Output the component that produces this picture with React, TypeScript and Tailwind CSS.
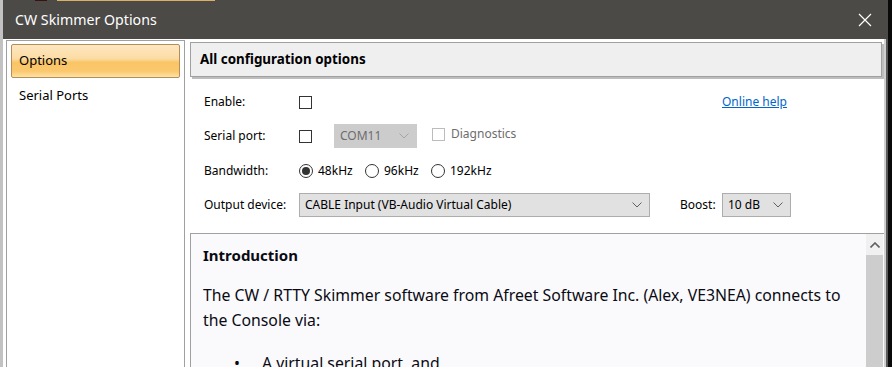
import React from 'react'

const font = { fontFamily: '"Noto Sans", "Open Sans", Arial, sans-serif' }

function Checkbox({ disabled = false }: { disabled?: boolean }) {
  return (
    <div
      className={
        'w-[13px] h-[13px] border bg-white shrink-0 ' +
        (disabled ? 'border-[#bcbcbc]' : 'border-[#333333]')
      }
    />
  )
}

function Radio({ checked = false }: { checked?: boolean }) {
  return (
    <div className="w-[14px] h-[14px] rounded-full border border-[#333333] bg-white flex items-center justify-center shrink-0">
      {checked && <div className="w-[8px] h-[8px] rounded-full bg-[#333333]" />}
    </div>
  )
}

function Chevron({ color = '#606060' }: { color?: string }) {
  return (
    <svg width="10" height="6" viewBox="0 0 10 6" className="shrink-0">
      <path d="M0.5 0.5 L5 5 L9.5 0.5" fill="none" stroke={color} strokeWidth="1" />
    </svg>
  )
}

function Select({ value, width, disabled = false }: { value: string; width: string; disabled?: boolean }) {
  return (
    <div
      className={
        'h-[24px] flex items-center justify-between pl-[5px] pr-[7px] border ' +
        width +
        (disabled
          ? ' bg-[#cccccc] border-[#cccccc] text-[#6d6d6d]'
          : ' bg-[#e1e1e1] border-[#adadad] text-black')
      }
    >
      <span>{value}</span>
      <Chevron color={disabled ? '#a4a4a4' : '#606060'} />
    </div>
  )
}

export default function App() {
  return (
    <div className="w-[892px] h-[367px] overflow-hidden flex bg-[#0a0a0a]" style={font}>
      <div className="w-[3px] bg-[#c2c2c2] shrink-0" />
      <div className="w-[885px] flex flex-col shrink-0 overflow-hidden">
        {/* desktop strip behind the window */}
        <div className="h-px flex bg-[#4b4a47] shrink-0">
          <div className="w-[32px]" />
          <div className="w-[12px] bg-[#3a1010]" />
          <div className="w-[10px]" />
          <div className="w-[158px] bg-[#d9b064]" />
        </div>

        {/* title bar */}
        <div className="h-[38px] shrink-0 bg-[#4b4a47] flex items-center justify-between pl-[12px] pr-[16px] text-white">
          <span className="text-[14.2px]">CW Skimmer Options</span>
          <svg width="14" height="14" viewBox="0 0 14 14">
            <path d="M1 1 L13 13 M13 1 L1 13" stroke="#ffffff" strokeWidth="1.2" />
          </svg>
        </div>

        {/* body */}
        <div className="flex-1 min-h-0 flex bg-white text-[12px] text-black">
          {/* navigation */}
          <div className="ml-[3px] mt-[1px] w-[179px] border border-[#a0a0a0] border-b-0 shrink-0 pt-[3px] px-[4px]">
            <div className="h-[34px] rounded-[2px] border border-[#b58d57] flex items-center pl-[7px] text-[13px] bg-[linear-gradient(to_bottom,#fde7c0_0%,#fcdca4_42%,#f9c565_55%,#fbc86f_82%,#fde2a8_100%)]">
              Options
            </div>
            <div className="h-[36px] flex items-center pl-[8px] text-[13px]">Serial Ports</div>
          </div>

          {/* right side */}
          <div className="w-[694px] ml-[5px] flex flex-col shrink-0">
            <div className="mt-[3px] shrink-0 w-[692px] h-[35px] bg-[#efefef] border border-[#a0a0a0] shadow-[2px_2px_0_#bdbdbd] flex items-center pl-[9px] font-bold text-[13.4px]">
              All configuration options
            </div>

            <div className="pt-[8px] pl-[14px] shrink-0">
              <div className="h-[34px] flex items-center">
                <div className="w-[95px]">Enable:</div>
                <div className="w-[423px]">
                  <Checkbox />
                </div>
                <span className="text-[#0066cc] underline">Online help</span>
              </div>

              <div className="h-[34px] flex items-center">
                <div className="w-[95px]">Serial port:</div>
                <Checkbox />
                <div className="ml-[22px]">
                  <Select value="COM11" width="w-[83px]" disabled />
                </div>
                <div className="ml-[15px] flex items-center gap-[6px] text-[#6d6d6d] -mt-[4px]">
                  <Checkbox disabled />
                  <span>Diagnostics</span>
                </div>
              </div>

              <div className="h-[35px] flex items-center">
                <div className="w-[95px]">Bandwidth:</div>
                <div className="w-[66px] flex items-center gap-[5px]">
                  <Radio checked />
                  <span>48kHz</span>
                </div>
                <div className="w-[66px] flex items-center gap-[5px]">
                  <Radio />
                  <span>96kHz</span>
                </div>
                <div className="flex items-center gap-[5px]">
                  <Radio />
                  <span>192kHz</span>
                </div>
              </div>

              <div className="h-[34px] flex items-center">
                <div className="w-[95px]">Output device:</div>
                <Select value="CABLE Input (VB-Audio Virtual Cable)" width="w-[351px]" />
                <div className="w-[42px] ml-[30px]">Boost:</div>
                <Select value="10 dB" width="w-[69px]" />
              </div>
            </div>

            {/* help content */}
            <div className="mt-[11px] w-[694px] flex-1 min-h-0 border border-[#a0a0a0] border-b-0 border-r-0 bg-[#fafafc] flex overflow-hidden">
              <div className="flex-1 pl-[12px] pt-[10px] text-[#0a0a14]">
                <div className="font-bold text-[15px] leading-[22px]">Introduction</div>
                <div className="mt-[17px] text-[15.8px] leading-[25px]">
                  The CW / RTTY Skimmer software from Afreet Software Inc. (Alex, VE3NEA) connects to the Console
                  via:
                </div>
                <ul className="mt-[18px] pl-[31px] text-[15.8px] leading-[25px]">
                  <li className="flex items-center">
                    <span className="w-[28px]">•</span>
                    <span>A virtual serial port, and</span>
                  </li>
                </ul>
              </div>
              <div className="w-[17px] mr-[1px] flex flex-col shrink-0">
                <div className="h-[21px] bg-[#f0f0f0] flex items-center justify-center">
                  <svg width="10" height="6" viewBox="0 0 10 6">
                    <path d="M0.5 5.5 L5 1 L9.5 5.5" fill="none" stroke="#606060" strokeWidth="1.6" />
                  </svg>
                </div>
                <div className="flex-1 bg-[#cdcdcd]" />
              </div>
            </div>
          </div>

          {/* window right frame */}
          <div className="w-[2px] bg-[#d0d0d0] shrink-0" />
          <div className="w-[2px] bg-[#5a5a5a] shrink-0" />
        </div>
      </div>
    </div>
  )
}
